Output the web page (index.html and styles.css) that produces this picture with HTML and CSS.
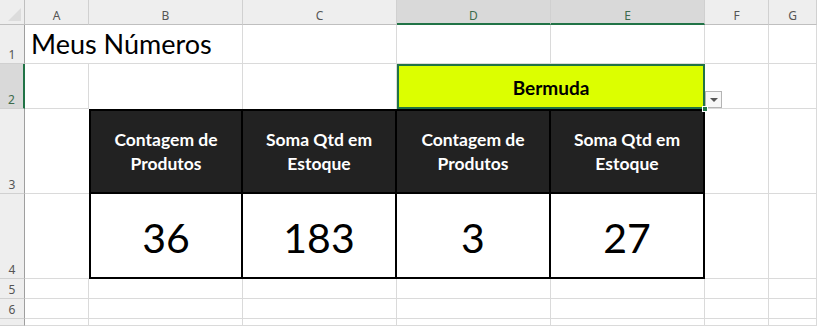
FILE: index.html
```html
<!DOCTYPE html>
<html lang="pt">
<head>
<meta charset="utf-8">
<title>Meus Números</title>
<link rel="stylesheet" href="styles.css">
</head>
<body>
<div class="sheet">
  <!-- column headers -->
  <div class="corner"><span class="tri"></span></div>
  <div class="ch">A</div>
  <div class="ch">B</div>
  <div class="ch">C</div>
  <div class="ch sel">D</div>
  <div class="ch sel">E</div>
  <div class="ch">F</div>
  <div class="ch">G</div>

  <!-- row 1 -->
  <div class="rh">1</div>
  <div class="c title span2">Meus Números</div>
  <div class="c"></div>
  <div class="c"></div>
  <div class="c"></div>
  <div class="c"></div>
  <div class="c"></div>

  <!-- row 2 -->
  <div class="rh sel">2</div>
  <div class="c"></div>
  <div class="c nob-b"></div>
  <div class="c nob-b"></div>
  <div class="c filter span2">Bermuda<span class="dd"><span class="arrow"></span></span><span class="handle"></span></div>
  <div class="c"></div>
  <div class="c"></div>

  <!-- row 3 -->
  <div class="rh">3</div>
  <div class="c nob-r"></div>
  <div class="t th first top">Contagem de<br>Produtos</div>
  <div class="t th top">Soma Qtd em<br>Estoque</div>
  <div class="t th top">Contagem de<br>Produtos</div>
  <div class="t th top">Soma Qtd em<br>Estoque</div>
  <div class="c"></div>
  <div class="c"></div>

  <!-- row 4 -->
  <div class="rh">4</div>
  <div class="c nob-r"></div>
  <div class="t num first">36</div>
  <div class="t num">183</div>
  <div class="t num">3</div>
  <div class="t num">27</div>
  <div class="c"></div>
  <div class="c"></div>

  <!-- row 5 -->
  <div class="rh">5</div>
  <div class="c"></div>
  <div class="c"></div>
  <div class="c"></div>
  <div class="c"></div>
  <div class="c"></div>
  <div class="c"></div>
  <div class="c"></div>

  <!-- row 6 -->
  <div class="rh">6</div>
  <div class="c"></div>
  <div class="c"></div>
  <div class="c"></div>
  <div class="c"></div>
  <div class="c"></div>
  <div class="c"></div>
  <div class="c"></div>

  <!-- row 7 (cut off) -->
  <div class="rh"></div>
  <div class="c"></div>
  <div class="c"></div>
  <div class="c"></div>
  <div class="c"></div>
  <div class="c"></div>
  <div class="c"></div>
  <div class="c"></div>
</div>
</body>
</html>
```

FILE: styles.css
```css
* { box-sizing: border-box; }
html, body {
  margin: 0;
  padding: 0;
  background: #ffffff;
  overflow: hidden;
}
.sheet {
  display: grid;
  grid-template-columns: 25px 64px 154px 154px 154px 154px 64px 48px;
  grid-template-rows: 25px 39px 45px 85px 85px 20px 20px 7px;
  width: 817px;
  height: 326px;
  font-family: Lato, "Open Sans", sans-serif;
}
.corner {
  background: #eeeeee;
  border-right: 1px solid #bfbfbf;
  border-bottom: 1px solid #bfbfbf;
  position: relative;
}
.tri {
  position: absolute;
  right: 3px;
  bottom: 3px;
  width: 0;
  height: 0;
  border-left: 13px solid transparent;
  border-bottom: 13px solid #dcdcdc;
}
.ch {
  background: #eeeeee;
  border-right: 1px solid #d0d0d0;
  border-bottom: 1px solid #bfbfbf;
  color: #555555;
  font-family: "Noto Sans", sans-serif;
  font-size: 12px;
  display: flex;
  align-items: center;
  justify-content: center;
  padding-top: 7px;
}
.ch.sel {
  background: #d9d9d9;
  border-bottom: 2px solid #217346;
  color: #3d6b4c;
}
.rh {
  background: #eeeeee;
  border-right: 1px solid #9f9f9f;
  border-bottom: 1px solid #d0d0d0;
  color: #555555;
  font-family: "Noto Sans", sans-serif;
  font-size: 12px;
  display: flex;
  align-items: flex-end;
  justify-content: center;
  line-height: 17px;
}
.rh.sel {
  background: #d9d9d9;
  border-right: 2px solid #217346;
  color: #3d6b4c;
}
.c {
  border-right: 1px solid #dadada;
  border-bottom: 1px solid #dadada;
  background: #ffffff;
}
.span2 { grid-column: span 2; }
.nob-r { border-right: none; }
.nob-b { border-bottom: none; }
.title {
  font-size: 27px;
  color: #000000;
  padding-left: 6px;
  display: flex;
  align-items: flex-end;
  padding-bottom: 3px;
  white-space: nowrap;
}
.filter {
  position: relative;
  background: #dcff00;
  border: 2px solid #217346;
  display: flex;
  align-items: center;
  justify-content: center;
  font-weight: 700;
  font-size: 19px;
  color: #000000;
  padding-top: 2px;
}
.dd {
  position: absolute;
  right: -19px;
  bottom: -1px;
  width: 17px;
  height: 17px;
  background: #f7f7f7;
  border: 1px solid #b4b4b4;
  display: flex;
  align-items: center;
  justify-content: center;
}
.arrow {
  width: 0;
  height: 0;
  border-left: 4px solid transparent;
  border-right: 4px solid transparent;
  border-top: 4px solid #555555;
}
.handle {
  position: absolute;
  right: -5px;
  bottom: -5px;
  width: 6px;
  height: 6px;
  background: #217346;
  border: 1px solid #ffffff;
}
.t {
  border-right: 2px solid #000000;
  border-bottom: 2px solid #000000;
  display: flex;
  align-items: center;
  justify-content: center;
  text-align: center;
}
.t.first { border-left: 2px solid #000000; }
.t.top { border-top: 2px solid #000000; }
.th {
  background: #222222;
  color: #ffffff;
  font-weight: 700;
  font-size: 17.5px;
  line-height: 24px;
}
.num {
  background: #ffffff;
  color: #000000;
  font-size: 41px;
  padding-top: 4px;
}
```
